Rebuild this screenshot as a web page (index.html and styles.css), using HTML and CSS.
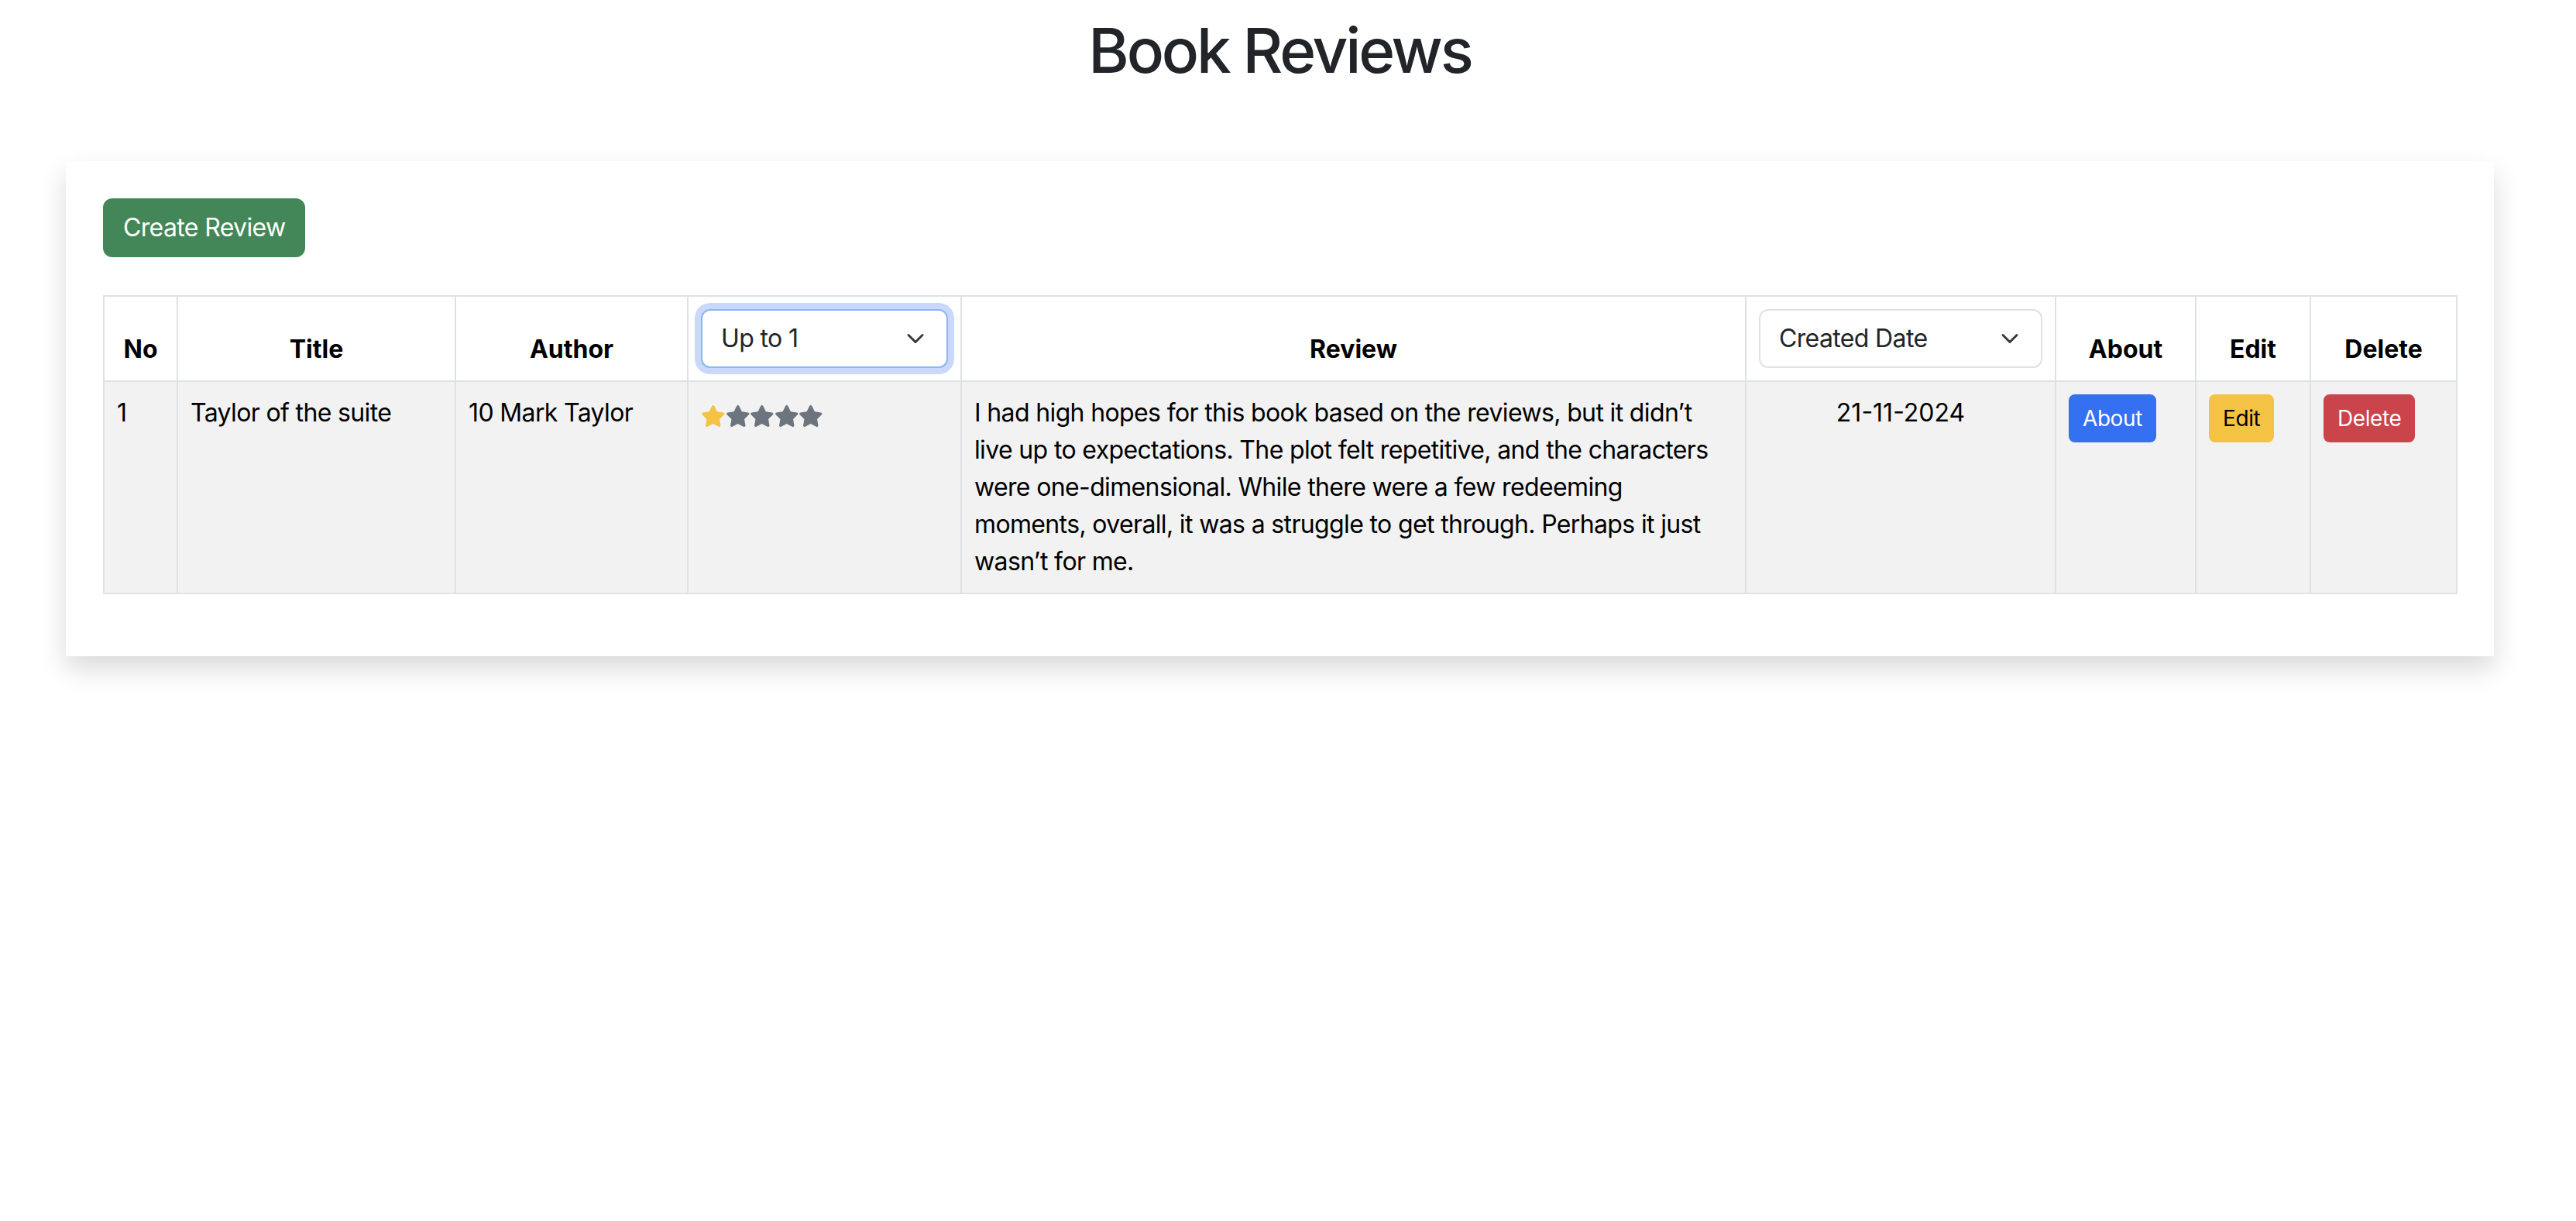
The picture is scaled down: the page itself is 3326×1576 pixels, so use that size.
FILE: index.html
```html
<!DOCTYPE html>
<html lang="en">
<head>
<meta charset="utf-8">
<title>Book Reviews</title>
<link rel="stylesheet" href="styles.css">
</head>
<body>
<div class="page">
  <h1 class="page-title">Book Reviews</h1>
  <div class="card">
    <div class="toolbar">
      <button class="btn btn-success" type="button">Create Review</button>
    </div>
    <table class="reviews">
      <colgroup>
        <col class="c-no">
        <col class="c-title">
        <col class="c-author">
        <col class="c-rating">
        <col class="c-review">
        <col class="c-date">
        <col class="c-about">
        <col class="c-edit">
        <col class="c-delete">
      </colgroup>
      <thead>
        <tr>
          <th>No</th>
          <th>Title</th>
          <th>Author</th>
          <th><select class="form-select is-focused"><option>Up to 1</option></select></th>
          <th>Review</th>
          <th><select class="form-select"><option>Created Date</option></select></th>
          <th>About</th>
          <th>Edit</th>
          <th>Delete</th>
        </tr>
      </thead>
      <tbody>
        <tr class="striped">
          <td>1</td>
          <td>Taylor of the suite</td>
          <td>10 Mark Taylor</td>
          <td>
            <div class="stars">
              <svg class="star star-on" viewBox="0 0 576 512"><path d="M259.3 17.8L194 150.2 47.9 171.5c-26.2 3.8-36.7 36.1-17.7 54.6l105.7 103-25 145.5c-4.5 26.3 23.2 46 46.4 33.7L288 439.6l130.7 68.7c23.2 12.2 50.9-7.4 46.4-33.7l-25-145.5 105.7-103c19-18.5 8.5-50.8-17.7-54.6L382 150.2 316.7 17.8c-11.7-23.6-45.6-23.9-57.4 0z"/></svg>
              <svg class="star" viewBox="0 0 576 512"><path d="M259.3 17.8L194 150.2 47.9 171.5c-26.2 3.8-36.7 36.1-17.7 54.6l105.7 103-25 145.5c-4.5 26.3 23.2 46 46.4 33.7L288 439.6l130.7 68.7c23.2 12.2 50.9-7.4 46.4-33.7l-25-145.5 105.7-103c19-18.5 8.5-50.8-17.7-54.6L382 150.2 316.7 17.8c-11.7-23.6-45.6-23.9-57.4 0z"/></svg>
              <svg class="star" viewBox="0 0 576 512"><path d="M259.3 17.8L194 150.2 47.9 171.5c-26.2 3.8-36.7 36.1-17.7 54.6l105.7 103-25 145.5c-4.5 26.3 23.2 46 46.4 33.7L288 439.6l130.7 68.7c23.2 12.2 50.9-7.4 46.4-33.7l-25-145.5 105.7-103c19-18.5 8.5-50.8-17.7-54.6L382 150.2 316.7 17.8c-11.7-23.6-45.6-23.9-57.4 0z"/></svg>
              <svg class="star" viewBox="0 0 576 512"><path d="M259.3 17.8L194 150.2 47.9 171.5c-26.2 3.8-36.7 36.1-17.7 54.6l105.7 103-25 145.5c-4.5 26.3 23.2 46 46.4 33.7L288 439.6l130.7 68.7c23.2 12.2 50.9-7.4 46.4-33.7l-25-145.5 105.7-103c19-18.5 8.5-50.8-17.7-54.6L382 150.2 316.7 17.8c-11.7-23.6-45.6-23.9-57.4 0z"/></svg>
              <svg class="star" viewBox="0 0 576 512"><path d="M259.3 17.8L194 150.2 47.9 171.5c-26.2 3.8-36.7 36.1-17.7 54.6l105.7 103-25 145.5c-4.5 26.3 23.2 46 46.4 33.7L288 439.6l130.7 68.7c23.2 12.2 50.9-7.4 46.4-33.7l-25-145.5 105.7-103c19-18.5 8.5-50.8-17.7-54.6L382 150.2 316.7 17.8c-11.7-23.6-45.6-23.9-57.4 0z"/></svg>
            </div>
          </td>
          <td>I had high hopes for this book based on the reviews, but it didn’t live up to expectations. The plot felt repetitive, and the characters were one-dimensional. While there were a few redeeming moments, overall, it was a struggle to get through. Perhaps it just wasn’t for me.</td>
          <td class="cell-center">21-11-2024</td>
          <td><button class="btn btn-sm btn-primary" type="button">About</button></td>
          <td><button class="btn btn-sm btn-warning" type="button">Edit</button></td>
          <td><button class="btn btn-sm btn-danger" type="button">Delete</button></td>
        </tr>
      </tbody>
    </table>
  </div>
</div>
</body>
</html>
```
FILE: styles.css
```css
* {
  box-sizing: border-box;
}

html, body {
  margin: 0;
  padding: 0;
  background: #ffffff;
}

body {
  font-family: Inter, "Liberation Sans", sans-serif;
  font-size: 32px;
  line-height: 1.5;
  letter-spacing: -0.02em;
  color: #212529;
}

.page {
  width: 3305px;
  padding-bottom: 200px;
}

.page-title {
  margin: 17px 0 0;
  font-size: 80px;
  font-weight: 500;
  line-height: 1.2;
  letter-spacing: -0.04em;
  text-align: center;
  color: #212529;
}

.card {
  margin: 95px 85px 0;
  padding: 48px;
  background: #ffffff;
  box-shadow: 0 16px 32px rgba(0, 0, 0, 0.15);
}

.toolbar {
  display: flex;
  margin-bottom: 49px;
}

.btn {
  display: inline-block;
  font-family: inherit;
  font-size: 32px;
  font-weight: 400;
  line-height: 48px;
  letter-spacing: -0.02em;
  padding: 12px 24px;
  border: 2px solid transparent;
  border-radius: 12px;
  cursor: pointer;
  white-space: nowrap;
}

.btn-sm {
  font-size: 28px;
  line-height: 42px;
  letter-spacing: -0.015em;
  padding: 8px 16px;
  border-radius: 8px;
}

.btn-success {
  background: #438758;
  border-color: #438758;
  color: #ffffff;
}

.btn-primary {
  background: #3570f2;
  border-color: #3570f2;
  color: #ffffff;
}

.btn-warning {
  background: #f5c344;
  border-color: #f5c344;
  color: #000000;
}

.btn-danger {
  background: #cb444b;
  border-color: #cb444b;
  color: #ffffff;
}

.reviews {
  width: 100%;
  table-layout: fixed;
  border-collapse: collapse;
  margin-bottom: 32px;
  color: #000000;
  vertical-align: top;
  border: 2px solid #dee2e6;
}

.c-no { width: 95px; }
.c-title { width: 359px; }
.c-author { width: 300px; }
.c-rating { width: 353px; }
.c-review { width: 1013px; }
.c-date { width: 400px; }
.c-about { width: 181px; }
.c-edit { width: 148px; }
.c-delete { width: 189px; }

.reviews th,
.reviews td {
  padding: 16px;
  border: 2px solid #dee2e6;
}

.reviews thead th {
  vertical-align: bottom;
  text-align: center;
  font-weight: 700;
  letter-spacing: 0;
  background: #ffffff;
}

.reviews td {
  vertical-align: top;
  text-align: left;
}

.reviews tr.striped td {
  background: #f2f2f2;
}

.reviews td.cell-center {
  text-align: center;
  letter-spacing: 0;
}

.form-select {
  display: block;
  width: 100%;
  height: 76px;
  padding: 12px 72px 12px 24px;
  font-family: inherit;
  font-size: 32px;
  font-weight: 400;
  line-height: 48px;
  letter-spacing: -0.02em;
  color: #212529;
  background-color: #ffffff;
  background-image: url("data:image/svg+xml,%3csvg xmlns='http://www.w3.org/2000/svg' viewBox='0 0 16 16'%3e%3cpath fill='none' stroke='%23343a40' stroke-linecap='round' stroke-linejoin='round' stroke-width='2' d='m2 5 6 6 6-6'/%3e%3c/svg%3e");
  background-repeat: no-repeat;
  background-position: right 24px center;
  background-size: 32px 24px;
  border: 2px solid #dee2e6;
  border-radius: 12px;
  appearance: none;
  -webkit-appearance: none;
  outline: none;
}

.form-select.is-focused {
  border-color: #8db4f7;
  box-shadow: 0 0 0 8px #cad9fb;
}

.stars {
  display: flex;
  padding-top: 14px;
}

.star {
  width: 31.5px;
  height: 28px;
  fill: #6c757d;
  flex: none;
}

.star.star-on {
  fill: #f5c344;
}
```
